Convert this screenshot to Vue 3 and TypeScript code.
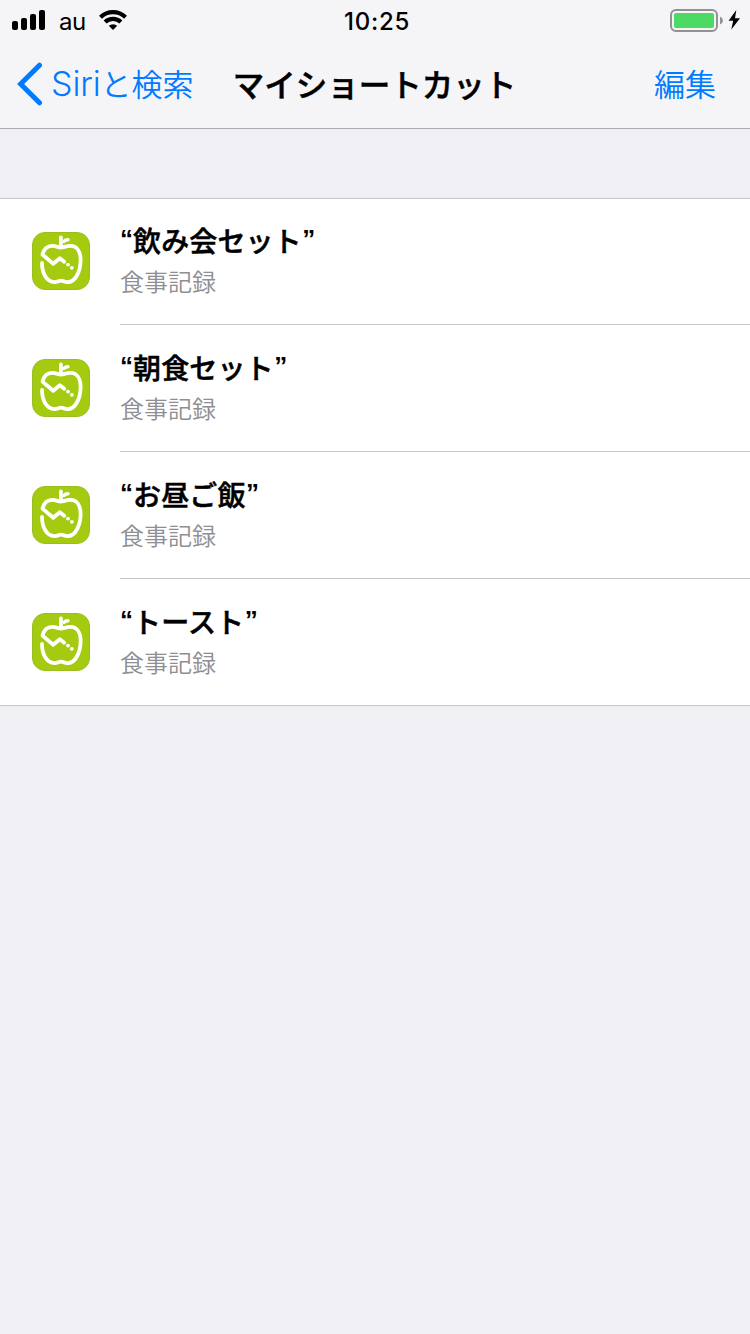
<script setup lang="ts">
interface Shortcut {
  phrase: string
  app: string
}

const shortcuts: Shortcut[] = [
  { phrase: '飲み会セット', app: '食事記録' },
  { phrase: '朝食セット', app: '食事記録' },
  { phrase: 'お昼ご飯', app: '食事記録' },
  { phrase: 'トースト', app: '食事記録' },
]
</script>

<template>
  <div class="screen">
    <header class="top">
      <div class="status">
        <div class="side">
          <svg class="signal" width="34" height="20" viewBox="0 0 34 20">
            <rect x="0" y="11" width="6" height="9" rx="2" />
            <rect x="9" y="8" width="6" height="12" rx="2" />
            <rect x="18" y="4" width="6" height="16" rx="2" />
            <rect x="27" y="0" width="6" height="20" rx="2" />
          </svg>
          <span class="carrier">au</span>
          <svg class="wifi" width="28" height="20" viewBox="0 0 28 20">
            <path d="M1.5 7.2a18 18 0 0 1 25 0" />
            <path d="M6.1 12a11.4 11.4 0 0 1 15.8 0" />
            <path class="dot" d="M9.8 15.8a6.2 6.2 0 0 1 8.4 0L14 20z" />
          </svg>
        </div>
        <time class="clock">10:25</time>
        <div class="side right">
          <svg class="battery" width="72" height="24" viewBox="0 0 72 24">
            <rect x="1" y="1" width="46" height="21" rx="5" fill="none" stroke="#929295" stroke-width="2" />
            <rect x="4" y="4" width="40" height="15" rx="2" fill="#4cd964" />
            <path d="M50 7.5q3 1.5 3 4t-3 4z" fill="#929295" />
            <path d="M66.3 1 58.6 11.8H63.2L61.3 20.6 70 9.2H65z" fill="#000" />
          </svg>
        </div>
      </div>
      <nav class="nav">
        <a class="back">
          <svg width="26" height="44" viewBox="0 0 26 44">
            <path d="M22.5 3.2 3.6 22 22.5 40.8" fill="none" stroke="#007aff" stroke-width="5" stroke-linecap="round" />
          </svg>
          <span class="siri">Siri</span><span class="kanji">と検索</span>
        </a>
        <h1 class="title">マイショートカット</h1>
        <a class="edit">編集</a>
      </nav>
    </header>

    <ul class="list">
      <li v-for="item in shortcuts" :key="item.phrase" class="row">
        <svg class="app-icon" width="58" height="58" viewBox="0 0 58 58">
          <rect x=".5" y=".5" width="57" height="57" rx="12.5" fill="#a4cb0f" stroke="#9bbd22" />
          <g fill="none" stroke="#fff" stroke-width="3.8" stroke-linecap="round" stroke-linejoin="round">
            <path d="M10 31C10 41 14.5 50.2 22.5 50.2C26 50.2 26.6 48.6 29 48.6S32 50.2 35.5 50.2C43.5 50.2 48.6 39 48.6 28C48.6 19 44.5 13.9 38.5 13.9C33.5 13.9 32 15.6 29 15.6S24.5 13.9 20 13.9C15 13.9 12 17 10.5 22.6L21.2 31.8L27.8 26.2L32.2 29.8" />
            <path d="M28.9 5.5V14.5" />
            <path d="M32 9.4Q33.4 7.8 36 7.8" stroke-width="3.4" />
          </g>
          <circle cx="36" cy="32.6" r="1.9" fill="#fff" />
          <circle cx="39.8" cy="35.8" r="1.9" fill="#fff" />
        </svg>
        <div class="body">
          <div class="phrase"><span class="quote">“</span>{{ item.phrase }}<span class="quote close">”</span></div>
          <div class="app">{{ item.app }}</div>
        </div>
      </li>
    </ul>
  </div>
</template>

<style>
body {
  margin: 0;
  background: #efeff4;
}
</style>

<style scoped>
.screen {
  width: 750px;
  min-height: 1334px;
  background: #efeff4;
  font-family: Inter, 'Noto Sans CJK JP', sans-serif;
  color: #000;
}

.top {
  box-sizing: border-box;
  height: 129px;
  background: #f5f5f7;
  border-bottom: 1px solid #a9a9b0;
}

.status {
  display: grid;
  grid-template-columns: 1fr auto 1fr;
  align-items: center;
  height: 40px;
  padding: 0 8px 0 12px;
}

.side {
  display: flex;
  align-items: center;
}

.right {
  justify-content: flex-end;
}

.battery {
  margin-top: 2px;
}

.carrier {
  margin: 3px 13px 0 13px;
  font-size: 24px;
  line-height: 30px;
  letter-spacing: -0.4px;
}

.wifi {
  fill: none;
  stroke: #000;
  stroke-width: 4.2;
}

.wifi .dot {
  fill: #000;
  stroke: none;
}

.clock {
  margin-top: 3px;
  font-size: 24px;
  font-weight: 500;
  line-height: 30px;
  letter-spacing: 0.7px;
}

.nav {
  display: grid;
  grid-template-columns: 1fr auto 1fr;
  align-items: center;
  height: 88px;
  padding: 0 18px 0 17px;
  color: #007aff;
}

.back {
  display: flex;
  align-items: center;
  height: 44px;
  line-height: 44px;
  white-space: nowrap;
}

.siri {
  margin-left: 8px;
  font-size: 34px;
  font-weight: 350;
  letter-spacing: -0.1px;
}

.kanji,
.edit {
  margin-bottom: 3px;
  font-family: 'Noto Sans CJK JP', sans-serif;
  font-size: 31px;
  font-weight: 350;
  line-height: 44px;
}

.title {
  margin: 0 0 3px;
  font-family: 'Noto Sans CJK JP', sans-serif;
  font-size: 31.5px;
  font-weight: 500;
  line-height: 44px;
  color: #000;
  -webkit-text-stroke: 0.5px #000;
}

.edit {
  justify-self: end;
  margin-right: 16px;
}

.list {
  display: flex;
  flex-direction: column;
  margin: 69px 0 0;
  padding: 0;
  list-style: none;
  background: linear-gradient(#c8c7cc, #c8c7cc) top / 100% 1px no-repeat #fff;
  border-bottom: 1px solid #c8c7cc;
}

.row {
  display: flex;
  height: 127px;
  padding-left: 32px;
}

.row:last-child {
  height: 126px;
}

.app-icon {
  flex: none;
  margin: 34px 30px 0 0;
}

.body {
  box-sizing: border-box;
  flex: 1;
  padding-top: 22px;
}

.row:not(:last-child) .body {
  border-bottom: 1px solid #c8c7cc;
}

.phrase {
  height: 41px;
  font-family: 'Noto Sans CJK JP', sans-serif;
  font-size: 28px;
  font-weight: 500;
  line-height: 40px;
  letter-spacing: 0.1px;
  -webkit-text-stroke: 0.5px #000;
}

.quote {
  font-family: 'Liberation Sans', sans-serif;
  font-size: 26px;
  font-weight: 700;
  line-height: 1;
  vertical-align: 4px;
  -webkit-text-stroke: 0;
}

.close {
  margin-left: 0.5px;
}

.app {
  font-family: 'Noto Sans CJK JP', sans-serif;
  font-size: 24px;
  font-weight: 350;
  line-height: 40px;
  color: #8e8e93;
}
</style>
